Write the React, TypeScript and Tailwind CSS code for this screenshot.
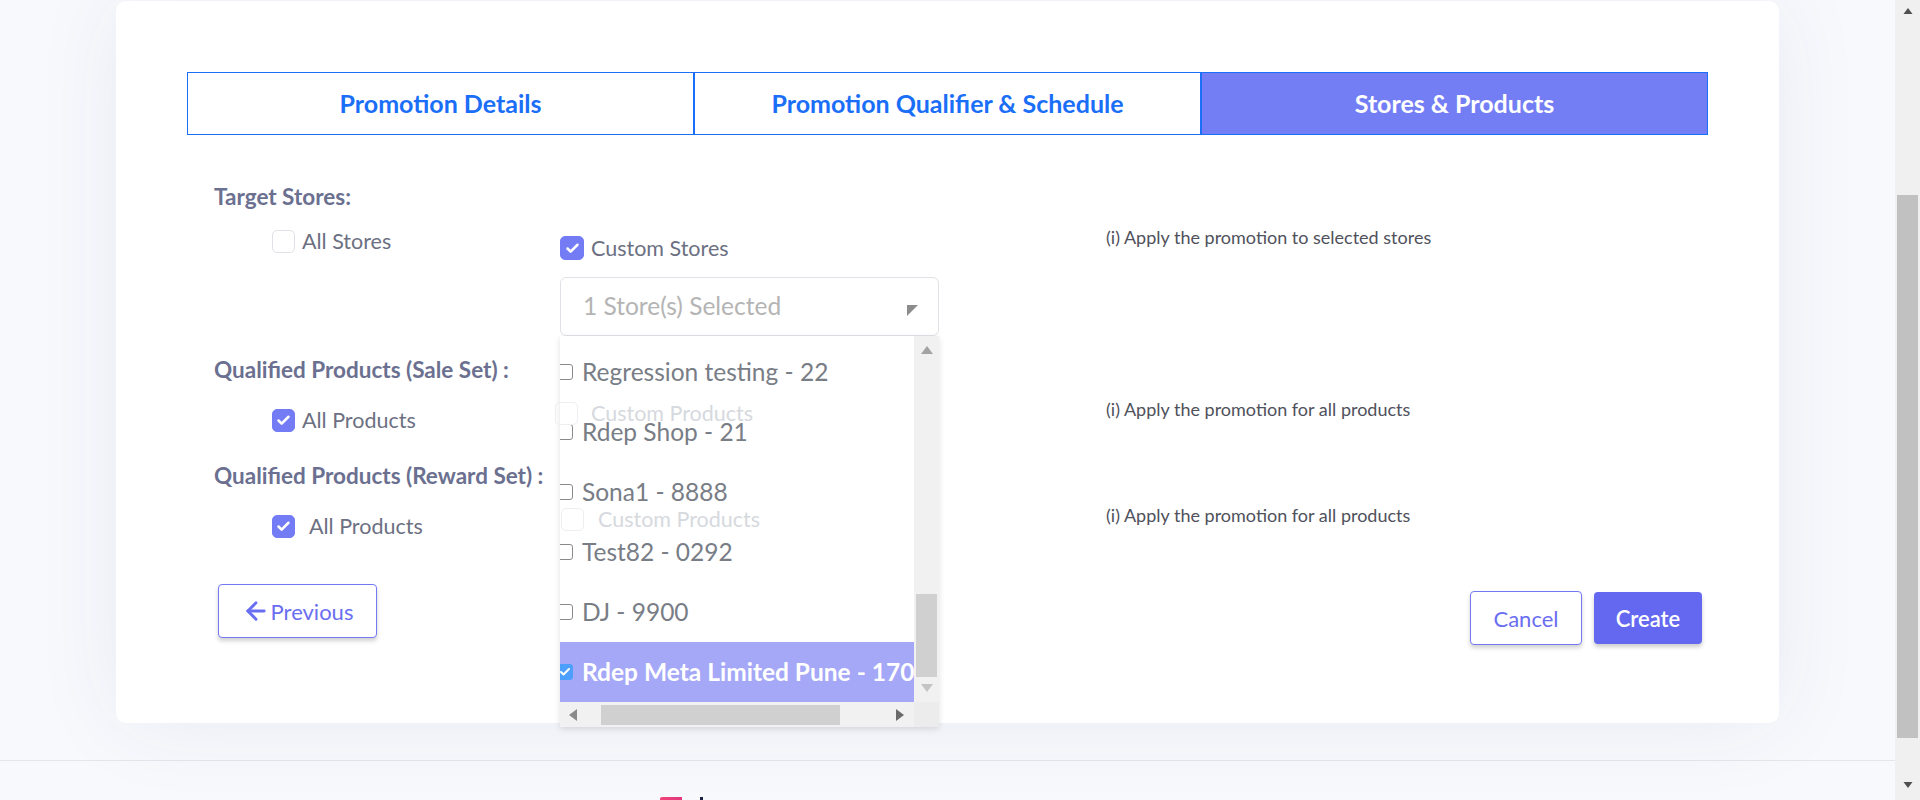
import { ArrowLeft, Check } from 'lucide-react';
import clsx from 'clsx';

const STORES = [
  'Regression testing - 22',
  'Rdep Shop - 21',
  'Sona1 - 8888',
  'Test82 - 0292',
  'DJ - 9900',
];

function Box({ checked = false, faint = false, className }: { checked?: boolean; faint?: boolean; className?: string }) {
  return (
    <span
      className={clsx(
        'flex h-[23px] w-[23px] shrink-0 items-center justify-center rounded-[5px] border',
        checked ? 'border-[#737cf4] bg-[#737cf4]' : faint ? 'border-[#eceef1] bg-transparent' : 'border-[#dfe2e6] bg-white',
        className
      )}
    >
      {checked && <Check className="h-[15px] w-[15px] text-white" strokeWidth={4} />}
    </span>
  );
}

function NativeBox({ checked = false }: { checked?: boolean }) {
  return (
    <span
      className={clsx(
        'flex h-[16px] w-[16px] shrink-0 items-center justify-center rounded-[3px] border-[1.5px]',
        checked ? 'border-[#4d9ffd] bg-[#4d9ffd]' : 'border-[#8a8a8a] bg-white'
      )}
    >
      {checked && <Check className="h-[12px] w-[12px] text-white" strokeWidth={4} />}
    </span>
  );
}

function Tri({ dir, className }: { dir: 'up' | 'down' | 'left' | 'right'; className?: string }) {
  const pts = {
    up: '0,8 12,8 6,0',
    down: '0,0 12,0 6,8',
    left: '8,0 8,12 0,6',
    right: '0,0 0,12 8,6',
  }[dir];
  const vb = dir === 'up' || dir === 'down' ? '0 0 12 8' : '0 0 8 12';
  return (
    <svg viewBox={vb} className={className} fill="currentColor">
      <polygon points={pts} />
    </svg>
  );
}

function StoreList() {
  return (
    <div className="absolute left-0 top-full z-10 flex h-[391px] w-[379px] flex-col bg-white shadow-[0_2px_6px_rgba(0,0,0,0.12)]">
      <div className="flex min-h-0 flex-1">
        <div className="min-w-0 flex-1 overflow-hidden pt-[6px]">
          {STORES.map((s) => (
            <div key={s} className="-ml-[3px] flex h-[60px] items-center gap-[9px] whitespace-nowrap text-[24.5px] text-[#787d86]">
              <NativeBox />
              <span>{s}</span>
            </div>
          ))}
          <div className="flex h-[60px] items-center gap-[9px] whitespace-nowrap bg-[#a5a8f7] text-[24.5px] font-bold text-white">
            <span className="-ml-[3px]">
              <NativeBox checked />
            </span>
            <span>Rdep Meta Limited Pune - 1700</span>
          </div>
        </div>
        <div className="flex w-[25px] flex-col items-center bg-[#f1f1f1]">
          <Tri dir="up" className="mt-[10px] h-[8px] w-[12px] text-[#a3a3a3]" />
          <div className="mt-[240px] h-[83px] w-[21px] bg-[#d0d0d0]" />
          <Tri dir="down" className="mt-[7px] h-[8px] w-[12px] text-[#c4c4c4]" />
        </div>
      </div>
      <div className="flex h-[25px]">
        <div className="flex flex-1 items-center bg-[#f1f1f1]">
          <Tri dir="left" className="ml-[9px] h-[12px] w-[8px] text-[#8a8a8a]" />
          <div className="ml-[24px] h-[20px] w-[239px] bg-[#d0d0d0]" />
          <Tri dir="right" className="ml-[56px] h-[12px] w-[8px] text-[#6a6a6a]" />
        </div>
        <div className="w-[25px] bg-[#ececec]" />
      </div>
    </div>
  );
}

export default function App() {
  const tabs = ['Promotion Details', 'Promotion Qualifier & Schedule', 'Stores & Products'];

  return (
    <div className="flex h-[800px] w-full overflow-hidden bg-[#f8f9fd] font-[family-name:Lato,sans-serif]">
      <div className="flex min-w-0 flex-1 flex-col">
        <div className="h-[760px] px-[116px] pt-[1px]">
          <div className="relative h-[722px] rounded-[10px] bg-white px-[71px] pt-[71px] shadow-[0_0_90px_rgba(40,50,100,0.07)]">
            {/* step tabs */}
            <div className="grid h-[63px] grid-cols-3">
              {tabs.map((t, i) => (
                <div
                  key={t}
                  className={clsx(
                    'flex items-center justify-center border border-[#1a6ef7] text-[25px] font-bold',
                    i === 2 ? 'bg-[#737ef5] text-white' : 'bg-white text-[#1a6ef7]'
                  )}
                >
                  {t}
                </div>
              ))}
            </div>

            <div className="px-[27px]">
              {/* target stores */}
              <div className="mt-[50px] text-[22.5px] font-bold leading-[24px] text-[#6b7090]">Target Stores:</div>
              <div className="mt-[21px] grid grid-cols-[346px_546px_1fr] items-start">
                <div className="flex h-[23px] items-center gap-[7px] pl-[58px] text-[21.5px] text-[#6c7082]">
                  <Box />
                  <span>All Stores</span>
                </div>
                <div className="relative z-10 mt-[6px]">
                  <div className="flex h-[24px] items-center gap-[7px] text-[21.5px] text-[#6c7082]">
                    <Box checked className="h-[24px] w-[24px]" />
                    <span>Custom Stores</span>
                  </div>
                  <div className="relative mt-[17px] w-[379px]">
                    <div className="flex h-[59px] items-center justify-between rounded-[6px] border border-[#dfe2e6] pl-[22px] pr-[20px] text-[24.5px] text-[#b4b4b4]">
                      <span>1 Store(s) Selected</span>
                      <svg viewBox="0 0 10 10" className="mt-[8px] h-[11px] w-[11px] text-[#8c8c8c]" fill="currentColor">
                        <polygon points="0,0 10,0 0,10" />
                      </svg>
                    </div>
                    <StoreList />
                  </div>
                </div>
                <div className="text-[18px] leading-[14px] text-[#4f515c]">(i) Apply the promotion to selected stores</div>
              </div>

              {/* sale set */}
              <div className="mt-[22px] text-[22.5px] font-bold leading-[24px] text-[#6b7090]">Qualified Products (Sale Set) :</div>
              <div className="mt-[20px] grid grid-cols-[346px_546px_1fr] items-start">
                <div className="mt-[6px] flex h-[24px] items-center gap-[7px] pl-[58px] text-[21.5px] text-[#6c7082]">
                  <Box checked />
                  <span>All Products</span>
                </div>
                <div className="relative z-20 -ml-[5px] flex h-[23px] items-center gap-[13px] text-[21.5px] text-[#d6d9de]">
                  <Box faint />
                  <span>Custom Products</span>
                </div>
                <div className="text-[18px] leading-[14px] text-[#4f515c]">(i) Apply the promotion for all products</div>
              </div>

              {/* reward set */}
              <div className="mt-[32px] text-[22.5px] font-bold leading-[24px] text-[#6b7090]">Qualified Products (Reward Set) :</div>
              <div className="mt-[20px] grid grid-cols-[346px_546px_1fr] items-start">
                <div className="mt-[6px] flex h-[24px] items-center gap-[14px] pl-[58px] text-[21.5px] text-[#6c7082]">
                  <Box checked />
                  <span>All Products</span>
                </div>
                <div className="relative z-20 ml-[1px] flex h-[23px] items-center gap-[14px] text-[21.5px] text-[#d6d9de]">
                  <Box faint />
                  <span>Custom Products</span>
                </div>
                <div className="text-[18px] leading-[14px] text-[#4f515c]">(i) Apply the promotion for all products</div>
              </div>

              {/* actions */}
              <div className="mt-[46px] flex items-start justify-between">
                <button
                  type="button"
                  className="ml-[4px] flex h-[54px] w-[159px] items-center justify-center gap-[1px] rounded-[4px] border border-[#7479f3] bg-white text-[22px] text-[#6a6ef1] shadow-[0_3px_4px_rgba(0,0,0,0.18)]"
                >
                  <ArrowLeft className="h-[28px] w-[28px]" strokeWidth={2.5} />
                  Previous
                </button>
                <div className="-mr-[21px] mt-[7px] flex items-start gap-[12px]">
                  <button
                    type="button"
                    className="h-[54px] w-[112px] rounded-[4px] border border-[#7479f3] bg-white text-[22px] text-[#6a6ef1] shadow-[0_3px_4px_rgba(0,0,0,0.18)]"
                  >
                    Cancel
                  </button>
                  <button
                    type="button"
                    className="mt-[1px] h-[52px] w-[108px] rounded-[4px] bg-[#6468f1] text-[22px] font-semibold text-white shadow-[0_3px_4px_rgba(0,0,0,0.2)]"
                  >
                    Create
                  </button>
                </div>
              </div>
            </div>
          </div>
        </div>

        {/* footer */}
        <div className="flex flex-1 items-end border-t border-[#e4e6ea] bg-[#f8f9fd] pl-[660px]">
          <div className="h-[3px] w-[22px] rounded-tl-[2px] bg-gradient-to-r from-[#f0457a] to-[#e2367e]" />
          <div className="ml-[18px] h-[3px] w-[3px] bg-[#1c2340]" />
        </div>
      </div>

      {/* page scrollbar */}
      <div className="flex w-[25px] flex-col items-center bg-[#f0f0f0]">
        <Tri dir="up" className="mt-[8px] h-[6px] w-[10px] text-[#505050]" />
        <div className="mt-[181px] h-[543px] w-[21px] bg-[#c1c1c1]" />
        <Tri dir="down" className="mt-[44px] h-[6px] w-[10px] text-[#505050]" />
      </div>
    </div>
  );
}
